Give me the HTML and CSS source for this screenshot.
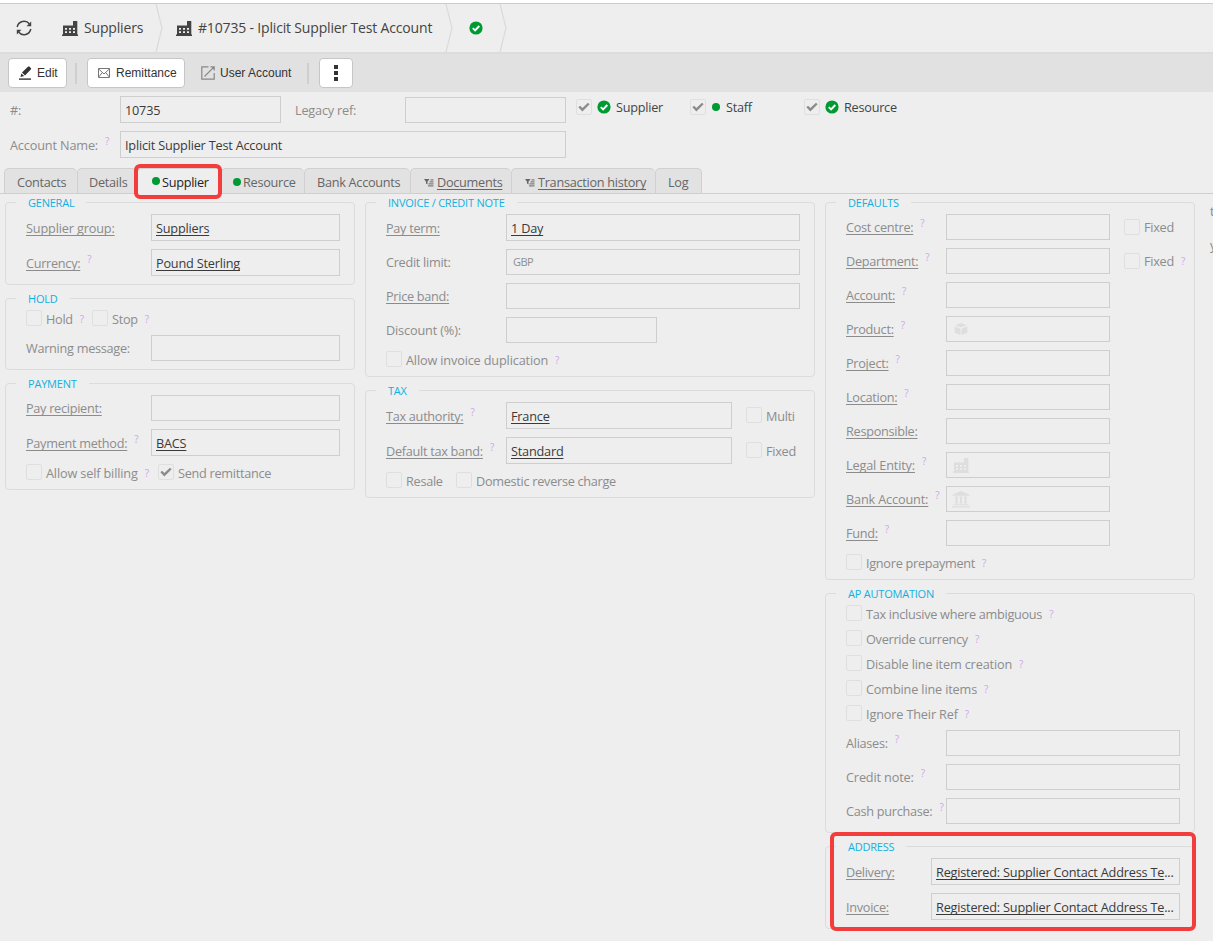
FILE: index.html
```html
<!DOCTYPE html>
<html lang="en">
  <head>
    <meta charset="utf-8">
    <title>Iplicit Supplier Test Account</title>
    <link rel="stylesheet" href="styles.css">
  </head>
  <body>
    <!-- shared icons -->
    <svg class="defs" width="0" height="0">
      <symbol id="i_factory" viewBox="0 0 16 15">
        <path fill="currentColor" fill-rule="evenodd" d="M1 4.500h10V0h4.300V13.500H1zM3 7h2v1.700H3zM7 7h2v1.700H7zM11 7h2v1.700h-2zM3 10.300h2V12H3zM7 10.300h2V12H7zM11 10.300h2V12h-2zM0 13.400h16V15H0z"/>
      </symbol>
      <symbol id="i_ok" viewBox="0 0 14 14">
        <circle cx="7" cy="7" r="6.600" fill="#009a33"/>
        <path d="M3.800 7.200l2.300 2.300 4.200-4.500" fill="none" stroke="#fff" stroke-width="1.900"/>
      </symbol>
      <symbol id="i_filter" viewBox="0 0 10 8">
        <path fill="currentColor" d="M0 0h5.500L3.500 2.800V5.500L2 4.500V2.800z"/>
        <path fill="none" stroke="currentColor" stroke-width="1.200" d="M6.500 0.900h3M5.500 2.900h4M4.500 4.900h5M4 6.900h5.500" opacity=".8"/>
      </symbol>
      <symbol id="i_tick" viewBox="0 0 14 14">
        <path d="M2.200 6.500l3.200 3.200 6.400-6.200" fill="none" stroke="currentColor" stroke-width="2.400"/>
      </symbol>
    </svg>

    <div class="breadcrumb">
      <div class="crumb_refresh">
        <svg width="16" height="16" viewBox="0 0 16 16" fill="none" stroke="#444" stroke-width="1.500"><path d="M1.200 7A7 7 0 0 1 13.500 4M14.800 9A7 7 0 0 1 2.500 12"/><path fill="#444" stroke="none" d="M15.200 1.500v4.700h-4.700zM.8 14.500V9.800h4.700z"/></svg>
      </div>
      <div class="crumb crumb_list"><svg class="factory"><use href="#i_factory"/></svg><span>Suppliers</span></div>
      <svg class="chevron" width="8" height="48" viewBox="0 0 8 48"><path d="M1 0l6 24-6 24"/></svg>
      <div class="crumb crumb_item"><svg class="factory"><use href="#i_factory"/></svg><span>#10735 - Iplicit Supplier Test Account</span></div>
      <svg class="chevron" width="8" height="48" viewBox="0 0 8 48"><path d="M1 0l6 24-6 24"/></svg>
      <div class="crumb crumb_state"><svg class="ok"><use href="#i_ok"/></svg></div>
      <svg class="chevron" width="8" height="48" viewBox="0 0 8 48"><path d="M1 0l6 24-6 24"/></svg>
    </div><!-- breadcrumb -->

    <div class="toolbar">
      <button class="btn btn_edit">
        <svg width="13" height="14" viewBox="0 0 13 14" fill="#333"><path d="M1.500 11l.8-3.600 2.900 2.700zM3 6.600L8.900.8c.5-.5 1.200-.5 1.700 0l1.200 1.200c.5.500.5 1.100 0 1.600L6 9.400z"/><path d="M0 12.400h12v1.400H0z"/></svg>
        Edit
      </button>
      <i class="sep"></i>
      <button class="btn btn_mail">
        <svg width="12" height="10" viewBox="0 0 12 10" fill="none" stroke="#777"><path d="M.5.500h11v9H.5zM.5.800L6 6 11.500.8M.5 9.200l3.800-4.600M11.500 9.200L7.700 4.600"/></svg>
        Remittance
      </button>
      <button class="btn btn_plain">
        <svg width="14" height="14" viewBox="0 0 14 14" fill="none" stroke="#888" stroke-width="1.200"><path d="M7.500.8H.8v12.400h12.400V7M3.500 10.500l9.300-9.300M9.500.8h3.700v3.700"/></svg>
        User Account
      </button>
      <i class="sep sep_last"></i>
      <button class="btn btn_more">
        <svg width="4" height="16" viewBox="0 0 4 16" fill="#333"><path d="M0 0h4v4H0zM0 6h4v4H0zM0 12h4v4H0z"/></svg>
      </button>
    </div><!-- toolbar -->

    <div class="head">
      <div class="head_fields">
        <div class="row">
          <label class="w110">#:</label><div class="field tall w161">10735</div>
          <label class="legacy">Legacy ref:</label><div class="field w161">&nbsp;</div>
        </div>
        <div class="row">
          <label class="w110 wide">Account Name:<sup>?</sup></label><div class="field tall grow">Iplicit Supplier Test Account</div>
        </div>
      </div>
      <div class="roles">
        <div class="check role"><i class="box"><svg><use href="#i_tick"/></svg></i><svg class="ok"><use href="#i_ok"/></svg>Supplier</div>
        <div class="check role"><i class="box"><svg><use href="#i_tick"/></svg></i><b class="dot"></b>Staff</div>
        <div class="check role"><i class="box"><svg><use href="#i_tick"/></svg></i><svg class="ok"><use href="#i_ok"/></svg>Resource</div>
      </div>
    </div><!-- head -->

    <div class="tabs">
      <div class="tab tab_contacts">Contacts</div>
      <div class="tab tab_details">Details</div>
      <div class="tab tab_active"><b class="dot"></b>Supplier<div class="mark"></div></div>
      <div class="tab tab_resource"><b class="dot"></b>Resource</div>
      <div class="tab tab_bank">Bank Accounts</div>
      <div class="tab tab_docs"><svg class="filter"><use href="#i_filter"/></svg><u>Documents</u></div>
      <div class="tab tab_history"><svg class="filter"><use href="#i_filter"/></svg><u>Transaction history</u></div>
      <div class="tab tab_log">Log</div>
    </div><!-- tabs -->

    <div class="panel">
      <div class="col col_left">
        <div class="group">
          <div class="legend">GENERAL</div>
          <div class="row"><label class="w125 wide"><u>Supplier group:</u></label><div class="field tall grow"><u>Suppliers</u></div></div>
          <div class="row"><label class="w125"><u>Currency:</u><sup>?</sup></label><div class="field tall grow"><u>Pound Sterling</u></div></div>
        </div>
        <div class="group">
          <div class="legend">HOLD</div>
          <div class="row checks">
            <div class="check w66"><i class="box"></i>Hold<em>?</em></div>
            <div class="check"><i class="box"></i>Stop<em>?</em></div>
          </div>
          <div class="row"><label class="w125">Warning message:</label><div class="field grow"></div></div>
        </div>
        <div class="group">
          <div class="legend">PAYMENT</div>
          <div class="row"><label class="w125"><u>Pay recipient:</u></label><div class="field grow"></div></div>
          <div class="row"><label class="w125"><u>Payment method:</u><sup>?</sup></label><div class="field tall grow"><u>BACS</u></div></div>
          <div class="row checks">
            <div class="check w132 wide"><i class="box"></i>Allow self billing<em>?</em></div>
            <div class="check"><i class="box"><svg><use href="#i_tick"/></svg></i>Send remittance</div>
          </div>
        </div>
      </div><!-- col_left -->

      <div class="col col_mid">
        <div class="group">
          <div class="legend">INVOICE / CREDIT NOTE</div>
          <div class="row"><label class="w120"><u>Pay term:</u></label><div class="field tall grow"><u>1 Day</u></div></div>
          <div class="row"><label class="w120">Credit limit:</label><div class="field grow hint">GBP</div></div>
          <div class="row"><label class="w120"><u>Price band:</u></label><div class="field grow"></div></div>
          <div class="row"><label class="w120 wide">Discount (%):</label><div class="field w151"></div></div>
          <div class="row checks"><div class="check wide"><i class="box"></i>Allow invoice duplication<em>?</em></div></div>
        </div>
        <div class="group">
          <div class="legend">TAX</div>
          <div class="row"><label class="w120"><u>Tax authority:</u><sup>?</sup></label><div class="field tall w226"><u>France</u></div><div class="check side"><i class="box"></i>Multi</div></div>
          <div class="row"><label class="w120"><u>Default tax band:</u><sup>?</sup></label><div class="field tall w226"><u>Standard</u></div><div class="check side"><i class="box"></i>Fixed</div></div>
          <div class="row checks">
            <div class="check w70"><i class="box"></i>Resale</div>
            <div class="check"><i class="box"></i>Domestic reverse charge</div>
          </div>
        </div>
      </div><!-- col_mid -->

      <div class="col col_right">
        <div class="group">
          <div class="legend">DEFAULTS</div>
          <div class="row"><label class="w100"><u>Cost centre:</u><sup>?</sup></label><div class="field w164"></div><div class="check side side_up"><i class="box"></i>Fixed</div></div>
          <div class="row"><label class="w100"><u>Department:</u><sup>?</sup></label><div class="field w164"></div><div class="check side side_up"><i class="box"></i>Fixed<em>?</em></div></div>
          <div class="row"><label class="w100"><u>Account:</u><sup>?</sup></label><div class="field w164"></div></div>
          <div class="row"><label class="w100"><u>Product:</u><sup>?</sup></label><div class="field w164 with_icon">
            <svg class="cube" width="14" height="14" viewBox="0 0 14 14" fill="currentColor"><path d="M7 1l5.800 2.200L7 5.300 1.200 3.200zM.7 4.500l5.800 2.200v6.200L.7 10.700zM13.300 4.500L7.500 6.700v6.200l5.800-2.200z"/></svg>
          </div></div>
          <div class="row"><label class="w100"><u>Project:</u><sup>?</sup></label><div class="field w164"></div></div>
          <div class="row"><label class="w100"><u>Location:</u><sup>?</sup></label><div class="field w164"></div></div>
          <div class="row"><label class="w100"><u>Responsible:</u></label><div class="field w164"></div></div>
          <div class="row"><label class="w100 wide"><u>Legal Entity:</u><sup>?</sup></label><div class="field w164 with_icon"><svg class="factory"><use href="#i_factory"/></svg></div></div>
          <div class="row"><label class="w100 wide"><u>Bank Account:</u><sup>?</sup></label><div class="field w164 with_icon">
            <svg class="bank" width="18" height="17" viewBox="0 0 18 17" fill="currentColor"><path d="M9 0l8.500 3.800v1H.5v-1zM3 5.500h3v1H5.500v5H6v1H3v-1h.5v-5H3zM7.500 5.500h3v1H10v5h.5v1h-3v-1H8v-5h-.5zM12 5.500h3v1h-.5v5h.5v1h-3v-1h.5v-5H12zM1.500 13.200h15v1h-15zM0 15.200h18v1.200H0z"/></svg>
          </div></div>
          <div class="row"><label class="w100"><u>Fund:</u><sup>?</sup></label><div class="field w164"></div></div>
          <div class="row checks"><div class="check"><i class="box"></i>Ignore prepayment<em>?</em></div></div>
        </div>
        <div class="group">
          <div class="legend">AP AUTOMATION</div>
          <div class="row checks"><div class="check"><i class="box"></i>Tax inclusive where ambiguous<em>?</em></div></div>
          <div class="row checks"><div class="check"><i class="box"></i>Override currency<em>?</em></div></div>
          <div class="row checks"><div class="check wide"><i class="box"></i>Disable line item creation<em>?</em></div></div>
          <div class="row checks"><div class="check wide"><i class="box"></i>Combine line items<em>?</em></div></div>
          <div class="row checks"><div class="check wide"><i class="box"></i>Ignore Their Ref<em>?</em></div></div>
          <div class="row"><label class="w100">Aliases:<sup>?</sup></label><div class="field grow"></div></div>
          <div class="row"><label class="w100 wide">Credit note:<sup>?</sup></label><div class="field grow"></div></div>
          <div class="row"><label class="w100">Cash purchase:<sup>?</sup></label><div class="field grow"></div></div>
        </div>
        <div class="group group_address">
          <div class="legend">ADDRESS</div>
          <div class="row"><label class="w85"><u>Delivery:</u></label><div class="field tall grow"><u>Registered: Supplier Contact Address Te</u>...</div></div>
          <div class="row"><label class="w85"><u>Invoice:</u></label><div class="field tall grow"><u>Registered: Supplier Contact Address Te</u>...</div></div>
          <div class="mark"></div>
        </div>
      </div><!-- col_right -->

      <div class="col_more">
        <p>t</p>
        <p>y</p>
      </div>
    </div><!-- panel -->
  </body>
</html>
```
FILE: styles.css
```css
* { box-sizing: border-box; }
body { margin: 0; height: 941px; overflow: hidden; background: #eee; color: #8c8c8c; font: 12.7px/26px "Open Sans", "Noto Sans", sans-serif; letter-spacing: -0.28px; white-space: nowrap; }
svg { display: block; flex: none; }
u { text-decoration: underline; text-underline-offset: 2px; text-decoration-thickness: 1px; text-decoration-skip-ink: none; }
.defs { position: absolute; }
.factory { width: 16px; height: 15px; }
.ok { width: 14px; height: 14px; }
.dot { flex: none; width: 8px; height: 8px; border-radius: 50%; background: #009a33; }

/* breadcrumb */
.breadcrumb { display: flex; height: 49px; margin-top: 3px; padding-left: 16px; border-top: 1px solid #ccc; box-shadow: 0 -3px #fff; color: #444; font-size: 14px; letter-spacing: -0.17px; }
.crumb_refresh { display: flex; align-items: center; width: 46px; }
.crumb { display: flex; align-items: center; gap: 6px; }
.crumb span { line-height: 20px; }
.crumb_list { width: 93px; }
.crumb_item { width: 282px; padding-left: 13px; }
.crumb_state { width: 46px; padding-left: 16px; }
.chevron path { fill: none; stroke: #dadada; stroke-width: 1.200; }

/* toolbar */
.toolbar { display: flex; align-items: center; height: 40px; padding-left: 8px; background: #e1e1e1; border-top: 2px solid #dcdcdc; }
.btn { display: flex; align-items: center; height: 30px; margin: 0; border: 1px solid #c6c6c6; border-radius: 4px; background: #fff; color: #333; font: 12px "Liberation Sans", Arial, sans-serif; letter-spacing: 0; white-space: nowrap; }
.btn_edit { width: 59px; padding: 0 0 0 10px; gap: 5px; }
.btn_mail { width: 98px; padding: 0 0 0 10px; gap: 6px; }
.btn_plain { width: 122px; padding: 0 0 0 15px; gap: 5px; border-color: transparent; background: none; }
.btn_more { width: 34px; padding: 0; justify-content: center; }
.sep { width: 2px; height: 21px; margin: 0 10px 0 8px; background: #cfcfcf; }
.sep_last { margin: 0 10px 0 0; }

/* fields */
.row { display: flex; }
.row label { flex: none; }
.row + .row { margin-top: 8px; }
.field { flex: none; height: 26px; padding: 0 4px; border: 1px solid #cecece; color: #3a3a3a; line-height: 25px; letter-spacing: -0.2px; overflow: hidden; }
.tall { height: 27px; line-height: 27px; }
.row:has(.tall) { line-height: 28px; height: 27px; }
.grow { flex: 1; }
.hint { padding-left: 6px; color: #8f8f8f; font-size: 11px; line-height: 24px; letter-spacing: -0.5px; }
.with_icon { display: flex; align-items: center; color: #dedede; }
.with_icon .factory { margin-left: 2px; }
.with_icon .cube { margin-left: 3px; }
.with_icon .bank { margin-left: 1px; }
.wide { letter-spacing: -0.15px; }
sup, em { color: #cfa6ea; font-size: 10px; font-style: normal; line-height: 0; }
sup { margin-left: 7px; vertical-align: 5px; }
em { margin-left: 7px; line-height: 19px; }
.check { display: flex; flex: none; height: 17px; line-height: 18px; }
.box { flex: none; width: 16px; height: 16px; margin-right: 4px; border: 1px solid #dfdfdf; border-radius: 2px; }
.box svg { width: 14px; height: 14px; color: #8c8c8c; }
.side { margin: 5px 0 0 14px; }
.side_up { line-height: 16px; }
.side_up em { line-height: 16px; }

.w66 { width: 66px; }
.w70 { width: 70px; }
.w85 { width: 85px; }
.w100 { width: 100px; }
.w110 { width: 110px; }
.w120 { width: 120px; }
.w125 { width: 125px; }
.w132 { width: 132px; }
.w151 { width: 151px; }
.w161 { width: 161px; }
.w164 { width: 164px; }
.w226 { width: 226px; }

/* account head */
.head { display: flex; height: 76px; padding: 4px 0 0 10px; }
.head_fields { width: 556px; }
.legacy { width: 110px; margin-left: 14px; letter-spacing: -0.2px; }
.head .w161 + .legacy + .field { margin-top: 1px; }
.roles { display: flex; padding: 3px 0 0 10px; color: #444; letter-spacing: -0.25px; }
.role { width: 114px; line-height: 16px; }
.role .ok { margin: 1px 5px 0 1px; }
.role .dot { margin: 4px 6px 0 2px; }

/* tabs */
.tabs { display: flex; height: 26px; padding-left: 4px; border-bottom: 1px solid #cfcfcf; color: #666; line-height: 26px; }
.tab { display: flex; height: 25px; border: 1px solid #d0d0d0; border-width: 1px 0 0 1px; border-radius: 5px 5px 0 0; background: #e2e2e2; }
.tab_contacts { width: 73px; padding-left: 12px; }
.tab_details { width: 60px; padding-left: 11px; }
.tab_active { position: relative; width: 84px; height: 26px; padding-left: 14px; background: #eee; color: #222; }
.tab_resource { width: 83px; padding-left: 11px; }
.tab_bank { width: 106px; padding-left: 12px; }
.tab_docs { width: 101px; padding-left: 13px; }
.tab_history { width: 144px; padding-left: 13px; }
.tab_log { width: 47px; padding-left: 12px; border-right-width: 1px; }
.tab .dot { margin: 8px 2px 0 0; }
.tab_resource .dot { margin-top: 9px; }
.tab .filter { width: 10px; height: 8px; margin: 10px 3px 0 0; }

/* red highlight frames */
.mark { position: absolute; border: 4px solid #f33d3d; border-radius: 6px; }
.tab_active .mark { top: -5px; left: -4px; width: 88px; height: 35px; }
.group_address .mark { top: -15px; left: 4px; width: 366px; height: 99px; }

/* panel */
.panel { display: flex; gap: 10px; padding: 8px 0 0 5px; }
.col { display: flex; flex: none; flex-direction: column; gap: 13px; }
.col_left { width: 350px; }
.col_mid { width: 450px; }
.col_right { width: 370px; }
.group { position: relative; padding: 0 14px 8px 20px; border: 1px solid #dcdcdc; border-radius: 4px; }
.legend { width: max-content; height: 16px; margin: -8px 0 3px -10px; padding: 0 12px; background: #eee; color: #12b0e0; font-size: 11px; line-height: 16px; letter-spacing: -0.22px; }
.col_more { flex: none; width: 20px; margin: -4px 0 0 5px; color: #888; }
.col_more p { margin: 0 0 8px; }
```
